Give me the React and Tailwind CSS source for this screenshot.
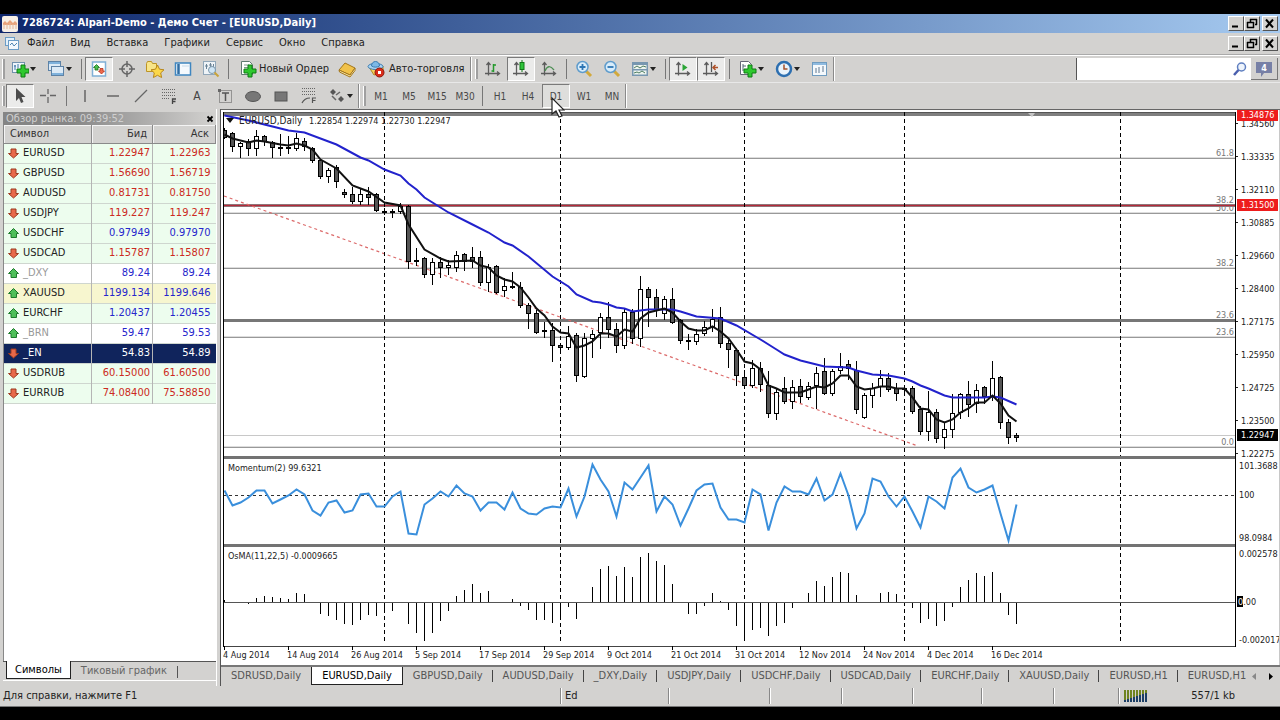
import { useState } from 'react';

const MENU = ['Файл', 'Вид', 'Вставка', 'Графики', 'Сервис', 'Окно', 'Справка'];

const QUOTES = [
  { symbol: 'EURUSD', bid: '1.22947', ask: '1.22963', dir: 'down' },
  { symbol: 'GBPUSD', bid: '1.56690', ask: '1.56719', dir: 'down' },
  { symbol: 'AUDUSD', bid: '0.81731', ask: '0.81750', dir: 'down' },
  { symbol: 'USDJPY', bid: '119.227', ask: '119.247', dir: 'down' },
  { symbol: 'USDCHF', bid: '0.97949', ask: '0.97970', dir: 'up' },
  { symbol: 'USDCAD', bid: '1.15787', ask: '1.15807', dir: 'down' },
  { symbol: '_DXY', bid: '89.24', ask: '89.24', dir: 'up', kind: 'muted' },
  { symbol: 'XAUUSD', bid: '1199.134', ask: '1199.646', dir: 'up', kind: 'gold' },
  { symbol: 'EURCHF', bid: '1.20437', ask: '1.20455', dir: 'up' },
  { symbol: '_BRN', bid: '59.47', ask: '59.53', dir: 'up', kind: 'muted' },
  { symbol: '_EN', bid: '54.83', ask: '54.89', dir: 'down', kind: 'selected' },
  { symbol: 'USDRUB', bid: '60.15000', ask: '61.60500', dir: 'down' },
  { symbol: 'EURRUB', bid: '74.08400', ask: '75.58850', dir: 'down' },
];

const CHART_TABS = [
  'SDRUSD,Daily', 'EURUSD,Daily', 'GBPUSD,Daily', 'AUDUSD,Daily', '_DXY,Daily', 'USDJPY,Daily',
  'USDCHF,Daily', 'USDCAD,Daily', 'EURCHF,Daily', 'XAUUSD,Daily', 'EURUSD,H1', 'EURUSD,H1',
];

// high, body top, body bottom, low, 1 = bearish
const CANDLES = [
  [128, 130, 137, 138, 1], [132, 133, 146, 151, 1], [142, 143, 146, 157, 0], [139, 141, 148, 155, 1],
  [130, 136, 148, 155, 0], [135, 136, 141, 145, 1], [141, 142, 147, 157, 1], [134, 147, 148, 155, 1],
  [136, 147, 148, 153, 1], [133, 138, 148, 150, 0], [138, 141, 146, 150, 1], [147, 148, 160, 162, 1],
  [159, 160, 176, 178, 1], [168, 170, 176, 182, 0], [165, 167, 181, 187, 1], [189, 192, 194, 197, 1],
  [187, 194, 201, 203, 1], [188, 194, 201, 204, 0], [187, 194, 197, 204, 1], [193, 194, 210, 211, 1],
  [208, 211, 212, 214, 1], [209, 211, 212, 217, 1], [203, 206, 211, 213, 0], [205, 206, 261, 268, 1],
  [248, 260, 261, 265, 1], [257, 258, 274, 277, 1], [258, 262, 274, 284, 0], [257, 262, 267, 277, 1],
  [260, 265, 267, 274, 0], [251, 255, 267, 271, 0], [253, 254, 261, 270, 1], [247, 257, 261, 267, 1],
  [251, 257, 282, 285, 1], [264, 267, 282, 291, 0], [265, 266, 292, 293, 1], [278, 286, 290, 296, 0],
  [272, 286, 287, 288, 1], [282, 287, 305, 307, 1], [303, 305, 313, 328, 1], [310, 313, 332, 333, 1],
  [322, 330, 331, 337, 1], [323, 330, 345, 361, 1], [343, 345, 347, 349, 1], [326, 336, 347, 349, 0],
  [333, 335, 375, 381, 1], [333, 338, 376, 377, 0], [330, 334, 338, 357, 0], [313, 317, 332, 348, 0],
  [302, 317, 329, 337, 1], [323, 329, 345, 352, 1], [308, 312, 345, 348, 0], [309, 312, 338, 343, 1],
  [276, 289, 338, 346, 0], [287, 289, 297, 326, 1], [289, 297, 309, 316, 1], [296, 299, 313, 319, 0],
  [288, 299, 322, 323, 1], [319, 320, 340, 343, 1], [334, 340, 341, 349, 1], [329, 334, 341, 344, 0],
  [321, 327, 333, 335, 0], [309, 319, 327, 331, 0], [307, 317, 343, 347, 1], [340, 343, 349, 367, 1],
  [348, 350, 375, 385, 1], [370, 377, 385, 386, 1], [360, 368, 385, 387, 0], [362, 368, 384, 391, 1],
  [371, 385, 413, 417, 1], [388, 392, 413, 419, 0], [377, 388, 401, 403, 1], [380, 387, 401, 408, 0],
  [379, 386, 396, 402, 1], [382, 386, 397, 399, 0], [367, 373, 385, 408, 0], [358, 371, 393, 394, 1],
  [369, 371, 393, 395, 0], [353, 366, 370, 373, 0], [360, 364, 368, 379, 1], [361, 370, 409, 413, 1],
  [393, 395, 417, 418, 0], [383, 388, 395, 407, 0], [370, 378, 386, 396, 0], [373, 378, 389, 391, 1],
  [383, 388, 393, 400, 1], [387, 388, 389, 391, 1], [386, 388, 411, 413, 1], [406, 409, 431, 434, 1],
  [391, 412, 431, 440, 0], [409, 412, 438, 442, 1], [423, 429, 437, 448, 0], [394, 413, 429, 437, 0],
  [393, 394, 412, 418, 0], [381, 394, 404, 416, 1], [384, 390, 403, 412, 0], [386, 387, 396, 403, 1],
  [361, 378, 396, 400, 0], [376, 377, 422, 428, 1], [419, 422, 437, 443, 1], [433, 435, 437, 441, 1],
];

// [bar, y] vertices of the moving averages
const SLOW_MA = [
  [0, 115], [3, 120], [8, 130], [10, 132], [14, 144], [17, 157], [18, 160], [20, 169], [22, 175], [23, 183],
  [24, 189], [25, 197], [28, 212], [31, 224], [33, 232], [35, 242], [36, 245], [38, 256], [41, 276], [43, 286],
  [44, 294], [46, 301], [47, 302], [48, 304], [49, 307], [50, 308], [51, 311], [53, 309], [56, 309], [57, 311],
  [59, 316], [62, 318], [64, 325], [67, 339], [69, 349], [70, 354], [72, 360], [75, 366], [78, 367], [79, 370],
  [81, 374], [83, 375], [85, 378], [86, 381], [87, 385], [88, 388], [90, 395], [91, 397], [95, 397], [96, 396],
  [97, 397], [99, 404],
];
const FAST_MA = [
  [0, 134], [1, 138], [3, 142], [4, 140], [5, 141], [7, 144], [8, 145], [9, 143], [10, 145], [11, 149], [12, 159],
  [14, 168], [16, 185], [18, 191], [20, 202], [22, 205], [23, 224], [25, 249], [27, 258], [28, 261], [31, 260],
  [32, 265], [33, 267], [34, 275], [35, 279], [36, 281], [37, 287], [38, 297], [39, 308], [40, 315], [41, 326],
  [42, 332], [43, 333], [44, 347], [45, 345], [46, 341], [47, 333], [48, 333], [49, 336], [50, 329], [51, 331],
  [52, 318], [53, 312], [55, 308], [56, 312], [57, 321], [58, 328], [59, 330], [60, 330], [61, 326], [62, 331],
  [63, 338], [64, 349], [65, 361], [66, 363], [67, 369], [68, 385], [69, 388], [70, 392], [72, 392], [73, 389],
  [74, 386], [75, 387], [76, 383], [77, 375], [78, 375], [79, 386], [80, 389], [81, 388], [82, 386], [83, 386],
  [84, 388], [85, 388], [86, 397], [87, 408], [88, 409], [89, 419], [90, 422], [91, 419], [92, 412], [93, 408],
  [94, 402], [95, 402], [96, 395], [97, 403], [98, 415], [99, 421],
];

const MOMENTUM = [
  490, 505, 502, 497, 490, 490, 503, 499, 495, 489, 494, 510, 515, 502, 500, 512, 510, 494, 493, 506,
  506, 496, 491, 533, 534, 504, 498, 491, 496, 485, 493, 496, 510, 502, 502, 509, 492, 508, 513, 514,
  508, 506, 507, 488, 516, 496, 464, 479, 491, 516, 482, 489, 477, 465, 511, 496, 504, 525, 508, 490,
  484, 483, 507, 519, 519, 522, 489, 494, 530, 502, 486, 491, 491, 494, 478, 500, 494, 473, 495, 528,
  513, 478, 481, 496, 506, 496, 511, 527, 496, 501, 508, 477, 468, 487, 492, 489, 485, 513, 540, 504,
];

const OSMA = [
  2, 0, 0, -1, 4, 6, 5, 4, 3, 9, 8, 0, -11, -13, -17, -21, -22, -17, -12, -13,
  -10, -8, 0, -21, -30, -38, -30, -18, -8, 6, 12, 18, 9, 11, 0, 0, 3, -3, -7, -17,
  -17, -20, -15, -4, -16, 0, 15, 33, 36, 26, 35, 25, 45, 49, 41, 37, 18, 0, -11, -11,
  -3, 9, 1, -7, -23, -34, -27, -25, -33, -23, -20, -5, 0, 9, 21, 16, 25, 30, 29, 7,
  0, 0, 9, 10, 8, 0, -5, -20, -16, -23, -18, -4, 15, 22, 29, 26, 30, 9, -12, -21,
];

const DATES = [
  '4 Aug 2014', '14 Aug 2014', '26 Aug 2014', '5 Sep 2014', '17 Sep 2014', '29 Sep 2014', '9 Oct 2014',
  '21 Oct 2014', '31 Oct 2014', '12 Nov 2014', '24 Nov 2014', '4 Dec 2014', '16 Dec 2014',
];

const PRICES = [
  '1.34560', '1.33335', '1.32110', '1.30885', '1.29660', '1.28400', '1.27175', '1.25950', '1.24725', '1.23500', '1.22275',
];

const LEVELS = [
  { y: 158, label: '61.8' }, { y: 213, label: '50.0' }, { y: 268, label: '38.2' },
  { y: 337, label: '23.6' }, { y: 447, label: '0.0' },
];

const barX = (i) => 8 * i + 1;
const toPoints = (list) => list.map(([i, y]) => `${barX(i) + 0.5},${y + 0.5}`).join(' ');

/* ---------- icons ---------- */

function Icon({ children, w = 18, h = 18 }) {
  return (
    <svg width={w} height={h} viewBox={`0 0 ${w} ${h}`} fill="none" aria-hidden="true" className="shrink-0">
      {children}
    </svg>
  );
}

const Plus = ({ x, y }) => (
  <path
    d="M4 0h4v4h4v4h-4v4h-4v-4h-4v-4h4z"
    transform={`translate(${x} ${y})`}
    fill="#2fc82f"
    stroke="#0f7a14"
  />
);

const Axes = () => (
  <path d="M4.5 3v12.500M1 13.500h14M2.500 5l2-2.500 2 2.500M13 11.500l2.500 2-2.500 2" stroke="#5c5c5c" strokeWidth="1.300" />
);

const icons = {
  newChart: (
    <Icon>
      <rect x="1.5" y="2.5" width="12" height="10" fill="#eef5fb" stroke="#7191ad" />
      <path d="M4 5v5M3 6h2M7 4v4" stroke="#3f78a8" />
      <Plus x={6} y={5} />
    </Icon>
  ),
  profiles: (
    <Icon>
      <rect x="1.5" y="1.5" width="12" height="9" fill="#dceaf6" stroke="#5d82a6" />
      <path d="M2 3h11" stroke="#7fb2dc" strokeWidth="2" />
      <rect x="4.500" y="6.500" width="12" height="9" fill="#dceaf6" stroke="#5d82a6" />
      <path d="M5 14h11" stroke="#7fb2dc" strokeWidth="2" />
    </Icon>
  ),
  marketWatch: (
    <Icon>
      <rect x="2.500" y="2" width="13" height="14" fill="#fff" stroke="#7fb0d6" strokeWidth="1.500" />
      <path d="M6.500 4.500l3 3H8v2.500H5V7.500H3.500z" fill="#4cbf4c" stroke="#17701a" strokeWidth="0.800" />
      <path d="M11.500 14l-3-3H10V8.500h3V11h1.500z" fill="#ee6a4c" stroke="#b5301a" strokeWidth="0.800" />
    </Icon>
  ),
  crosshairData: (
    <Icon>
      <circle cx="9" cy="9" r="5" stroke="#666" strokeWidth="1.500" />
      <path d="M9 1v6M9 11v6M1 9h6M11 9h6" stroke="#666" strokeWidth="1.500" />
    </Icon>
  ),
  navigator: (
    <Icon w={20}>
      <path d="M1.500 3.500l1-2h4l1 2h4v8h-10z" fill="#f8e58a" stroke="#bd9426" />
      <path d="M12.500 5l2 4.200 4.500.600-3.300 3.100.900 4.600-4.100-2.200-4.100 2.200.900-4.600L6 9.800l4.500-.600z" fill="#fbd84b" stroke="#b8861b" />
    </Icon>
  ),
  terminal: (
    <Icon>
      <rect x="1.500" y="3" width="15" height="12" fill="#f4f9fd" stroke="#3f86c0" strokeWidth="1.500" />
      <path d="M4.500 4v10" stroke="#2f6da3" strokeWidth="2.500" />
      <path d="M8 6h7" stroke="#c6d9e8" />
    </Icon>
  ),
  tester: (
    <Icon>
      <rect x="1.500" y="1.500" width="12" height="13" fill="#eef3f7" stroke="#91a7b9" />
      <path d="M4.500 4v5M8.500 3v5M3 6h3M7 5h3M11.500 4v3" stroke="#6b8396" />
      <circle cx="10" cy="10" r="3.500" fill="#cfe5f5" stroke="#7c96aa" />
      <path d="M12.500 12.500l4 4" stroke="#c9a33a" strokeWidth="2" />
    </Icon>
  ),
  newOrder: (
    <Icon>
      <path d="M2.500 1.500h8l3 3v10h-11z" fill="#fff" stroke="#5f7a70" />
      <path d="M5 5h5M5 7.500h4M5 10h2" stroke="#7b9a8a" />
      <Plus x={5} y={5} />
    </Icon>
  ),
  book: (
    <Icon>
      <path d="M1 10l6-7 10 5-5 7z" fill="#f1c24a" stroke="#a3761a" />
      <path d="M1 10l.500 2L12 17l5-6.500V8l-5 7z" fill="#fbe9a8" stroke="#a3761a" />
    </Icon>
  ),
  autoTrading: (
    <Icon>
      <path d="M2 7l5 8 9-3V6L8 8z" fill="#f4d25c" stroke="#b08a22" />
      <ellipse cx="8.500" cy="6.500" rx="7.500" ry="3" fill="#a9d3f2" stroke="#3b7db3" />
      <path d="M4.500 6c0-6 8-6 8 0-2 1.500-6 1.500-8 0z" fill="#7db9e6" stroke="#3b7db3" />
      <circle cx="12.500" cy="12.500" r="4.500" fill="#d92c1a" stroke="#8e170b" />
      <rect x="11" y="11" width="3" height="3" fill="#fff" />
    </Icon>
  ),
  bars: (
    <Icon>
      <Axes />
      <path d="M9.500 4v8M9.500 11H7.500M9.500 5h2.500" stroke="#239a2b" strokeWidth="1.500" />
    </Icon>
  ),
  candles: (
    <Icon>
      <Axes />
      <path d="M10 0v12" stroke="#117a17" />
      <rect x="8" y="2.500" width="4" height="7" fill="#2fc43a" stroke="#117a17" />
    </Icon>
  ),
  line: (
    <Icon>
      <Axes />
      <path d="M5 11c2-5 5-6 9-1" stroke="#4e8f55" strokeWidth="1.300" />
    </Icon>
  ),
  zoomIn: (
    <Icon>
      <path d="M11 11l5 5" stroke="#d2a93b" strokeWidth="3" />
      <circle cx="7.500" cy="7" r="5.500" fill="#d8ecfa" stroke="#5f9ccc" strokeWidth="1.500" />
      <path d="M4.500 7h6M7.500 4v6" stroke="#2d76b4" strokeWidth="1.800" />
    </Icon>
  ),
  zoomOut: (
    <Icon>
      <path d="M11 11l5 5" stroke="#d2a93b" strokeWidth="3" />
      <circle cx="7.500" cy="7" r="5.500" fill="#d8ecfa" stroke="#5f9ccc" strokeWidth="1.500" />
      <path d="M4.500 7h6" stroke="#2d76b4" strokeWidth="1.800" />
    </Icon>
  ),
  indicators: (
    <Icon>
      <rect x="1" y="2" width="16" height="14" fill="#7797b0" />
      <path d="M2.500 5h13v4h-13zM2.500 10.500h13v4h-13z" fill="#edf4ee" />
      <path d="M3 8l3-2 3 2 3-2 3 1M3 13l3-1 2 1 3-2 3 2" stroke="#4d7d62" />
    </Icon>
  ),
  autoScroll: (
    <Icon>
      <Axes />
      <path d="M8.500 4l5 3.500-5 3.500z" fill="#2aa536" />
    </Icon>
  ),
  chartShift: (
    <Icon>
      <Axes />
      <path d="M9.500 2v10" stroke="#555" strokeWidth="1.300" />
      <path d="M16 7.500h-4M13.500 5L11 7.500l2.500 2.500" stroke="#b0522a" strokeWidth="1.500" />
    </Icon>
  ),
  addIndicator: (
    <Icon>
      <path d="M1.500 1.500h8l3 3v10h-11z" fill="#fff" stroke="#667" />
      <path d="M4 4v7M4 6h3" stroke="#567" />
      <Plus x={5} y={5} />
    </Icon>
  ),
  periods: (
    <Icon>
      <circle cx="9" cy="9" r="7" fill="#e9f3fb" stroke="#2d6fb0" strokeWidth="2.500" />
      <path d="M9 4.500V9h3.500" stroke="#a3522d" strokeWidth="1.500" />
    </Icon>
  ),
  template: (
    <Icon>
      <rect x="1.500" y="2.500" width="14" height="13" fill="#f5f9fc" stroke="#6f9cc0" />
      <path d="M2 4h13" stroke="#8fbbe0" strokeWidth="2" />
      <path d="M5 8v5M8 7v6M12 6v6" stroke="#607890" />
    </Icon>
  ),
  pointer: (
    <Icon>
      <path d="M5 1v13l3-3 2 5 2.500-1-2-5h4z" fill="#4c4c4c" />
    </Icon>
  ),
  cross: (
    <Icon>
      <path d="M9 2v5M9 10v6M1 8.500h6M11 8.500h6" stroke="#666" strokeWidth="1.300" />
    </Icon>
  ),
  vLine: <Icon><path d="M9 3v12" stroke="#555" strokeWidth="1.300" /></Icon>,
  hLine: <Icon><path d="M3 9h12" stroke="#555" strokeWidth="1.300" /></Icon>,
  trend: <Icon><path d="M3 15L15 3" stroke="#666" strokeWidth="1.300" /></Icon>,
  fibo: (
    <Icon>
      <path d="M2 2.500h13M2 5.500h13M2 8.500h13M2 11.500h8" stroke="#666" strokeDasharray="1 1" />
      <path d="M12.500 17v-5h3.500M12.500 14.500h3" stroke="#444" strokeWidth="1.300" />
    </Icon>
  ),
  label: (
    <Icon>
      <rect x="3.500" y="3.500" width="12" height="12" stroke="#555" strokeDasharray="1 1" />
      <path d="M6 6h7M9.500 6v8" stroke="#555" strokeWidth="1.500" />
      <path d="M2 2h3v3H2z" fill="#666" />
    </Icon>
  ),
  ellipse: <Icon><ellipse cx="9" cy="9.500" rx="7.500" ry="5" fill="#777" stroke="#555" /></Icon>,
  rect: <Icon><rect x="3" y="5" width="12" height="9" fill="#777" stroke="#555" /></Icon>,
  fiboFan: (
    <Icon>
      <path d="M2 1.500h14M2 4.500h14M2 7.500h14" stroke="#666" strokeDasharray="1 1" />
      <path d="M2 16c2-4 4-5 8-5M12.500 16v-5h3.500M12.500 13.500h3" stroke="#555" strokeWidth="1.200" />
    </Icon>
  ),
  arrows: (
    <Icon>
      <path d="M5 2l3 3-3 3-3-3zM13 9l3 3-3 3-3-3z" fill="#555" />
      <path d="M4 9l4 4M8 8l4-3" stroke="#666" strokeWidth="1.500" />
    </Icon>
  ),
};

/* ---------- toolbar parts ---------- */

function Tool({ name, label, pressed }) {
  return (
    <button
      type="button"
      aria-label={label}
      className={`flex h-6 w-7 items-center justify-center ${pressed ? 'border border-t-[#7a7a7a] border-l-[#7a7a7a] border-r-white border-b-white bg-[#ebebea]' : ''}`}
    >
      {icons[name]}
    </button>
  );
}

function DropTool({ name, label }) {
  return (
    <button type="button" aria-label={label} className="flex h-6 w-9 items-center justify-center gap-px">
      {icons[name]}
      <Icon w={7} h={4}><path d="M0 0h6L3 4z" fill="#222" /></Icon>
    </button>
  );
}

const Sep = () => <span className="mx-[3px] h-5 w-px bg-[#777]" />;
const WideSep = () => <span className="mx-1 h-5 w-px bg-[#777]" />;
const Grip = () => <span className="mr-px h-5 w-[3px] border-l border-white bg-[#a0a0a0]" />;
const BarEnd = () => <span className="mr-[3px] h-6 w-px bg-white shadow-[-1px_0_0_#8a8a8a]" />;

function Period({ children, pressed }) {
  return (
    <button
      type="button"
      className={`relative flex h-6 w-7 items-center justify-center text-[10px] text-[#484848] ${pressed ? 'border border-t-[#7a7a7a] border-l-[#7a7a7a] border-r-white border-b-white bg-[#dededc]' : ''}`}
    >
      {children}
    </button>
  );
}

function WindowButtons() {
  const box = 'flex h-[15px] w-4 items-center justify-center border border-t-white border-l-white border-r-[#555] border-b-[#555] bg-[#d3d2d0]';
  return (
    <div className="flex pr-[2px]">
      <button type="button" aria-label="Свернуть" className={box}>
        <Icon w={12} h={11}><path d="M2 8.500h6" stroke="#000" strokeWidth="2" /></Icon>
      </button>
      <button type="button" aria-label="Восстановить" className={box}>
        <Icon w={12} h={11}>
          <path d="M4 1.500h7M4.500 1v3M10.500 1v6M9 6.500h2" stroke="#000" strokeWidth="1.500" />
          <path d="M1 4.500h7M1.500 4v6M7.500 4v6M1 9.500h7" stroke="#000" strokeWidth="1.500" />
        </Icon>
      </button>
      <button type="button" aria-label="Закрыть" className={`${box} ml-[2px]`}>
        <Icon w={12} h={11}><path d="M2 1.500l7 8M9 1.500l-7 8" stroke="#000" strokeWidth="2" /></Icon>
      </button>
    </div>
  );
}

/* ---------- market watch ---------- */

function DirArrow({ dir }) {
  return (
    <Icon w={11} h={11}>
      {dir === 'up' ? (
        <path d="M5.500.500L10.500 5.500H8.500V9.500H3V5.500H.500z" fill="#4fbf5a" stroke="#1c7a2a" />
      ) : (
        <path d="M5.500 10L.500 5.500H3V1H8V5.500H10.500z" fill="#e8694a" stroke="#9c3a20" />
      )}
    </Icon>
  );
}

const ROW_BG = {
  normal: 'bg-[#edfdee] text-[#222]',
  muted: 'bg-white text-[#999]',
  gold: 'bg-[#f7f6cf] text-[#222]',
  selected: 'bg-[#10245c] text-white',
};

function MarketWatch() {
  const th = 'border-r border-b border-[#8a8a8a] bg-[#d3d2d0] font-normal text-[#333] shadow-[inset_1px_1px_0_#f4f4f4]';
  return (
    <aside className="flex w-[217px] shrink-0 flex-col border-r border-r-white pt-[3px] pl-[3px]">
      <div className="flex h-[13px] items-center justify-between bg-linear-to-r from-[#858585] from-30% to-[#d3d2d0] pl-[3px]">
        <h2 className="text-[11px] leading-[13px] text-[#cfcfcf]">Обзор рынка: 09:39:52</h2>
        <button type="button" aria-label="Закрыть панель" className="flex h-[13px] w-3 items-center justify-center">
          <Icon w={8} h={8}><path d="M1.500 1.500l5 5M6.500 1.500l-5 5" stroke="#000" strokeWidth="1.800" /></Icon>
        </button>
      </div>
      <div className="flex-1 border-l border-[#888] bg-white">
        <table className="w-full table-fixed border-collapse text-[11px]">
          <thead>
            <tr className="h-[18px]">
              <th className={`${th} pl-[6px] text-left`}>Символ</th>
              <th className={`${th} w-[61px] pr-[5px] text-right`}>Бид</th>
              <th className={`${th} w-[63px] pr-[6px] text-right`}>Аск</th>
            </tr>
          </thead>
          <tbody>
            {QUOTES.map((q) => {
              const color = q.kind === 'selected' ? 'text-white' : q.dir === 'up' ? 'text-[#2626cc]' : 'text-[#cc2a22]';
              return (
                <tr key={q.symbol} className={`h-5 border-b border-[#cfd6cf] leading-4 ${ROW_BG[q.kind || 'normal']}`}>
                  <td className="border-r border-[#b5b5b5] pl-1">
                    <span className="flex items-center gap-1">
                      <DirArrow dir={q.dir} />
                      {q.symbol}
                    </span>
                  </td>
                  <td className={`border-r border-[#b5b5b5] pr-[2px] text-right ${color}`}>{q.bid}</td>
                  <td className={`pr-[5px] text-right ${color}`}>{q.ask}</td>
                </tr>
              );
            })}
          </tbody>
        </table>
      </div>
      <div className="mb-[5px] flex h-5 border-t border-t-[#555] border-b border-b-white pl-[3px] text-[11px]">
        <button type="button" className="-mt-px h-[18px] border border-t-0 border-[#222] bg-white px-2 leading-4">Символы</button>
        <button type="button" className="px-[10px] leading-4 text-[#666]">Тиковый график</button>
        <span className="mt-1 h-3 w-px bg-[#555]" />
      </div>
    </aside>
  );
}

/* ---------- chart ---------- */

function Plot() {
  return (
    <svg className="h-[555px] min-w-0 flex-1 text-[9px]" role="img" aria-label="EURUSD, Daily">
      {/* y values are measured from the top of the application window */}
      <g transform="translate(0 -110)">
        <rect x="0" y="112" width="100%" height="4" fill="#7f7f7f" />
        <rect x="0" y="112" width="100%" height="1" fill="#555" />

        {LEVELS.map((l) => (
          <g key={l.y}>
            <rect x="0" y={l.y} width="100%" height="1" fill="#999" />
            <rect x="0" y={l.y - 1} width="100%" height="1" fill="#ddd" />
            <text x="100%" dx="-1" y={l.y - 2} textAnchor="end" fill="#777">{l.label}</text>
          </g>
        ))}
        <text x="100%" dx="-1" y="203" textAnchor="end" fill="#777">38.2</text>
        <text x="100%" dx="-1" y="318" textAnchor="end" fill="#777">23.6</text>
        <rect x="0" y="435" width="100%" height="1" fill="#c8c8c8" />
        <rect x="0" y="319" width="100%" height="3" fill="#777" />
        <rect x="0" y="204" width="100%" height="3" fill="#8f7478" />
        <rect x="0" y="205" width="100%" height="1" fill="#b52a3a" />

        <line x1="1" y1="196" x2="695" y2="446" stroke="#dc6a6a" strokeWidth="1.200" strokeDasharray="3 3" />

        {[20, 42, 65, 85, 112].map((i) => (
          <line key={i} x1={barX(i) + 0.5} x2={barX(i) + 0.5} y1="112" y2="644" stroke="#000" strokeDasharray="4 3" />
        ))}

        <g shapeRendering="crispEdges">
          {CANDLES.map(([high, top, bottom, low, bearish], i) => (
            <g key={i} stroke="#000">
              <line x1={barX(i) + 0.5} x2={barX(i) + 0.5} y1={high} y2={low + 1} />
              <rect x={barX(i) - 1.5} y={top + 0.5} width="4" height={bottom - top} fill={bearish ? '#555' : '#fff'} />
            </g>
          ))}
        </g>
        <polyline points={toPoints(SLOW_MA)} fill="none" stroke="#2222cc" strokeWidth="2" />
        <polyline points={toPoints(FAST_MA)} fill="none" stroke="#111" strokeWidth="2" />

        <path d="M3 118h8l-4 5z" fill="#111" />
        <text x="16" y="124" fontSize="10" fill="#222">EURUSD,Daily</text>
        <text x="86" y="124" fill="#222">1.22854 1.22974 1.22730 1.22947</text>
        <path d="M805 113h7l-3 4z" fill="#c4c4c4" />

        <line x1="0" x2="100%" y1="495.500" y2="495.500" stroke="#333" strokeDasharray="3 3" />
        <polyline points={toPoints(MOMENTUM.map((y, i) => [i, y]))} fill="none" stroke="#3a8fdc" strokeWidth="2" />
        <text x="5" y="471" fill="#222">Momentum(2) 99.6321</text>

        <rect x="0" y="602" width="100%" height="1" fill="#555" />
        {OSMA.map((v, i) => v !== 0 && (
          <rect key={i} x={barX(i)} y={v > 0 ? 602 - v : 603} width="1" height={Math.abs(v)} fill="#000" />
        ))}
        <text x="5" y="559" fill="#222">OsMA(11,22,5) -0.0009665</text>

        <rect x="0" y="456" width="100%" height="3" fill="#737373" />
        <rect x="0" y="544" width="100%" height="3" fill="#737373" />
        <rect x="0" y="646" width="100%" height="1" fill="#444" />
        <rect x="0" y="112" width="1" height="535" fill="#000" />

        {DATES.map((d, i) => (
          <g key={d}>
            <rect x={barX(i * 8)} y="646" width="1" height="4" fill="#000" />
            <text x={barX(i * 8) - 1} y="658" fill="#222">{d}</text>
          </g>
        ))}
      </g>
    </svg>
  );
}

function PriceTag({ y, fill, children }) {
  return (
    <g>
      <rect x="2" y={y - 6} width="41" height="12" fill={fill} />
      <text x="6" y={y + 3} fill="#fff">{children}</text>
    </g>
  );
}

function PriceScale() {
  return (
    <svg className="h-[555px] w-11 shrink-0 text-[9px]" role="img" aria-label="Шкала цены">
      <g transform="translate(0 -110)" fill="#222">
        <rect x="0" y="112" width="1" height="535" fill="#000" />
        {PRICES.map((p, i) => (
          <g key={p}>
            <rect x="1" y={123 + 33 * i} width="2" height="1" />
            <text x="6" y={127 + 33 * i}>{p}</text>
          </g>
        ))}
        <text x="4" y="469">101.3688</text>
        <text x="4" y="498">100</text>
        <text x="4" y="541">98.0984</text>
        <text x="4" y="557">0.002578</text>
        <rect x="2" y="596" width="6" height="11" fill="#000" />
        <text x="3" y="605"><tspan fill="#fff">0</tspan>.00</text>
        <text x="4" y="643">-0.002017</text>
        <PriceTag y={115} fill="#ee1c1c">1.34876</PriceTag>
        <PriceTag y={205} fill="#ee1c1c">1.31500</PriceTag>
        <PriceTag y={435} fill="#000">1.22947</PriceTag>
      </g>
    </svg>
  );
}

function ChartTabs() {
  const [active, setActive] = useState(1);
  return (
    <div className="flex h-[21px] border-t-2 border-[#777] text-[11px]">
      <div className="flex min-w-0 flex-1 overflow-hidden">
        {CHART_TABS.map((t, i) => (
          <button
            key={i}
            type="button"
            onClick={() => setActive(i)}
            className={`relative h-[18px] shrink-0 px-[10px] leading-4 whitespace-nowrap ${i === active ? 'border border-t-0 border-[#222] bg-white text-black' : 'text-[#555]'}`}
          >
            {t}
            {i > active && <span className="absolute top-[3px] right-0 h-3 w-px bg-[#444]" />}
          </button>
        ))}
      </div>
      <button type="button" aria-label="Назад" className="flex h-[18px] w-4 items-center justify-center">
        <Icon w={4} h={7}><path d="M4 0v7L0 3.500z" fill="#888" /></Icon>
      </button>
      <button type="button" aria-label="Вперёд" className="flex h-[18px] w-[18px] items-center justify-center">
        <Icon w={4} h={7}><path d="M0 0v7l4-3.500z" fill="#000" /></Icon>
      </button>
    </div>
  );
}

/* ---------- status bar ---------- */

function StatusBar() {
  const cell = 'h-4 shrink-0 border-l border-[#888] shadow-[inset_1px_0_0_#fff]';
  return (
    <footer className="flex h-[21px] items-center border-b border-[#777] text-[11px] text-[#222]">
      <p className="flex-1 pl-[3px] leading-4">Для справки, нажмите F1</p>
      <span className={`${cell} w-[108px] pl-1 leading-4`}>Ed</span>
      <span className={`${cell} w-[101px]`} />
      <span className={`${cell} w-[72px]`} />
      <span className={`${cell} w-[71px]`} />
      <span className={`${cell} w-[69px]`} />
      <span className={`${cell} w-[72px]`} />
      <span className={`${cell} w-[65px]`} />
      <span className={`${cell} flex w-[162px] items-center pl-[5px] leading-4`}>
        <Icon w={24} h={13}>
          {[0, 1, 2, 3, 4, 5, 6, 7].map((i) => (
            <g key={i}>
              <rect x={i * 3} y="0" width="2" height="12" fill="#6f8420" />
              <rect x={i * 3} y={10 - i} width="2" height={2 + i} fill="#1c3f66" />
            </g>
          ))}
        </Icon>
        <span className="flex-1 pr-[45px] text-right">557/1 kb</span>
      </span>
    </footer>
  );
}

export default function App() {
  const [query, setQuery] = useState('');

  return (
    <div className="min-h-screen bg-black py-[14px] font-['DejaVu_Sans_Condensed','DejaVu_Sans',sans-serif]">
      <div className="flex flex-col overflow-hidden bg-[#d3d2d0]">
        <header className="flex h-[19px] items-center gap-1 bg-linear-to-r from-[#0f266b] to-[#a6caf0] pl-[2px]">
          <Icon w={16} h={16}>
            <rect width="16" height="16" rx="2" fill="#f7efe6" />
            <path d="M1 9V7l2-2 2 2 3-3 3 3 2-2 2 2v2z" fill="#e8a37c" />
            <path d="M2 8v5M5 8v5M8 7v6M11 8v5M14 8v5" stroke="#e6b79a" />
          </Icon>
          <h1 className="flex-1 text-[11px] font-bold whitespace-nowrap text-white">
            7286724: Alpari-Demo - Демо Счет - [EURUSD,Daily]
          </h1>
          <WindowButtons />
        </header>

        <nav className="flex h-[22px] items-center border-b border-[#aaa] pl-[5px] text-[11px] text-[#222]">
          <Icon w={14} h={15}>
            <rect x="0.500" y="1.500" width="9" height="8" fill="#e3f0fa" stroke="#6a9cc6" />
            <rect x="3.500" y="4.500" width="10" height="9" fill="#f3f9fd" stroke="#6a9cc6" />
            <path d="M5 9l2-2 2 3 3-3" stroke="#5287b3" />
          </Icon>
          <ul className="flex flex-1 gap-4 pl-2">
            {MENU.map((m) => (
              <li key={m}><button type="button">{m}</button></li>
            ))}
          </ul>
          <WindowButtons />
        </nav>

        <div className="flex h-[27px] items-center border-t border-white pl-[2px]">
          <Grip />
          <DropTool name="newChart" label="Новый график" />
          <DropTool name="profiles" label="Профили" />
          <Sep />
          <Tool name="marketWatch" label="Обзор рынка" pressed />
          <Tool name="crosshairData" label="Окно данных" />
          <Tool name="navigator" label="Навигатор" />
          <Tool name="terminal" label="Терминал" />
          <Tool name="tester" label="Тестер" />
          <Sep />
          <button type="button" className="flex h-6 w-[101px] items-center gap-[2px] pl-[7px] text-[11px] whitespace-nowrap text-[#222]">
            {icons.newOrder}Новый Ордер
          </button>
          <Tool name="book" label="MetaEditor" />
          <button type="button" className="flex h-6 w-[110px] items-center gap-1 pl-[6px] text-[11px] whitespace-nowrap text-[#222]">
            {icons.autoTrading}Авто-торговля
          </button>
          <BarEnd />
          <Grip />
          <Tool name="bars" label="Бары" />
          <Tool name="candles" label="Свечи" pressed />
          <Tool name="line" label="Линия" />
          <Sep />
          <Tool name="zoomIn" label="Увеличить" />
          <Tool name="zoomOut" label="Уменьшить" />
          <DropTool name="indicators" label="Окна" />
          <Sep />
          <Tool name="autoScroll" label="Автопрокрутка" pressed />
          <Tool name="chartShift" label="Сдвиг графика" pressed />
          <WideSep />
          <DropTool name="addIndicator" label="Индикаторы" />
          <DropTool name="periods" label="Периоды" />
          <Tool name="template" label="Шаблоны" />
          <BarEnd />
          <div className="ml-auto flex h-[22px] w-[175px] items-center border-l border-[#555] bg-white">
            <input
              type="text"
              aria-label="Поиск"
              value={query}
              onChange={(e) => setQuery(e.target.value)}
              className="h-5 min-w-0 flex-1 px-1 text-[11px] outline-none"
            />
            <button type="button" aria-label="Искать" className="pr-1">
              <Icon w={14} h={14}>
                <circle cx="8.500" cy="5" r="4" fill="#eef4fc" stroke="#5f7fc0" strokeWidth="1.500" />
                <path d="M5.500 8L1 13" stroke="#4a5fae" strokeWidth="2.500" />
              </Icon>
            </button>
          </div>
          <button type="button" aria-label="Сообщения" className="mr-[2px] flex h-[22px] w-[27px] items-center justify-center border-r border-b border-[#777]">
            <svg width="16" height="16" viewBox="0 0 16 16" aria-hidden="true" className="text-[9px] font-bold">
              <path d="M0 1h16v11H8l-3 4v-4H0z" fill="#7780a6" />
              <text x="8" y="10" textAnchor="middle" fill="#fff">4</text>
            </svg>
          </button>
        </div>

        <div className="flex h-[27px] items-center border-t border-[#e8e8e8] pl-[2px]">
          <Grip />
          <Tool name="pointer" label="Курсор" pressed />
          <Tool name="cross" label="Перекрестие" />
          <WideSep />
          <Tool name="vLine" label="Вертикальная линия" />
          <Tool name="hLine" label="Горизонтальная линия" />
          <Tool name="trend" label="Трендовая линия" />
          <Tool name="fibo" label="Линии Фибоначчи" />
          <button type="button" className="h-6 w-7 text-[12px] text-[#444]">A</button>
          <Tool name="label" label="Текстовая метка" />
          <Tool name="ellipse" label="Эллипс" />
          <Tool name="rect" label="Прямоугольник" />
          <Tool name="fiboFan" label="Веер Фибоначчи" />
          <DropTool name="arrows" label="Стрелки" />
          <BarEnd />
          <Grip />
          <Period>M1</Period>
          <Period>M5</Period>
          <Period>M15</Period>
          <Period>M30</Period>
          <Sep />
          <Period>H1</Period>
          <Period>H4</Period>
          <Period pressed>
            D1
            <span className="absolute top-3 left-2 z-10">
              <Icon w={14} h={22}>
                <path d="M1 1v16l4-3 3 6 3-1-3-6h5z" fill="#fff" stroke="#222" strokeWidth="1.200" />
              </Icon>
            </span>
          </Period>
          <Period>W1</Period>
          <Period>MN</Period>
          <BarEnd />
        </div>

        <main className="flex">
          <MarketWatch />
          <section className="ml-[3px] flex min-w-0 flex-1 flex-col border-l border-[#555]">
            <div className="flex border-t border-[#666] bg-white pl-[2px]">
              <Plot />
              <PriceScale />
              <span className="w-px bg-[#c8c8c8]" />
            </div>
            <ChartTabs />
          </section>
        </main>

        <StatusBar />
      </div>
    </div>
  );
}
